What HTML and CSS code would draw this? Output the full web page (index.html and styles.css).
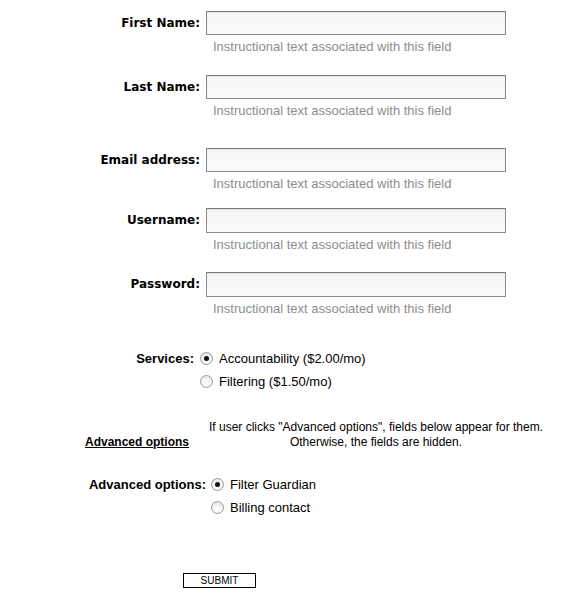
FILE: index.html
```html
<!DOCTYPE html>
<html>
<head>
<meta charset="utf-8">
<link rel="stylesheet" href="styles.css">
</head>
<body>
<form class="form">
  <div class="field f1">
    <label class="lbl">First Name:</label>
    <div class="ctl"><input class="txt" type="text"><div class="help">Instructional text associated with this field</div></div>
  </div>
  <div class="field f2">
    <label class="lbl">Last Name:</label>
    <div class="ctl"><input class="txt" type="text"><div class="help">Instructional text associated with this field</div></div>
  </div>
  <div class="field f3">
    <label class="lbl">Email address:</label>
    <div class="ctl"><input class="txt" type="text"><div class="help">Instructional text associated with this field</div></div>
  </div>
  <div class="field f4">
    <label class="lbl">Username:</label>
    <div class="ctl"><input class="txt" type="text"><div class="help">Instructional text associated with this field</div></div>
  </div>
  <div class="field f5">
    <label class="lbl">Password:</label>
    <div class="ctl"><input class="txt" type="password"><div class="help">Instructional text associated with this field</div></div>
  </div>

  <div class="group services">
    <span class="glbl">Services:</span>
    <div class="opts">
      <label class="opt"><input class="rad" type="radio" name="svc" checked> Accountability ($2.00/mo)</label>
      <label class="opt"><input class="rad" type="radio" name="svc"> Filtering ($1.50/mo)</label>
    </div>
  </div>

  <div class="adv">
    <a class="advlink" href="#">Advanced options</a>
    <p class="note"><span>If user clicks "Advanced options", fields below appear for them.</span><span>Otherwise, the fields are hidden.</span></p>
  </div>

  <div class="group advgroup">
    <span class="glbl">Advanced options:</span>
    <div class="opts">
      <label class="opt"><input class="rad" type="radio" name="adv" checked> Filter Guardian</label>
      <label class="opt"><input class="rad" type="radio" name="adv"> Billing contact</label>
    </div>
  </div>

  <div class="submitrow"><button class="submit" type="button">SUBMIT</button></div>
</form>
</body>
</html>
```
FILE: styles.css
```css
html, body { margin: 0; padding: 0; background: #fff; }
body { font-family: "Liberation Sans", Arial, sans-serif; font-size: 13px; color: #000; width: 576px; }
.form { display: flex; flex-direction: column; }

.field { display: flex; align-items: flex-start; }
.f1 { margin-top: 11px; }
.f2 { margin-top: 20px; }
.f3 { margin-top: 29px; }
.f4 { margin-top: 16px; }
.f5 { margin-top: 19px; }
.lbl {
  width: 200px; text-align: right; box-sizing: border-box;
  font-family: "DejaVu Sans", Verdana, sans-serif; font-weight: bold; font-size: 12px;
  line-height: 24px; height: 24px;
}
.ctl { margin-left: 6px; display: flex; flex-direction: column; }
.txt {
  width: 300px; height: 24px; box-sizing: border-box; margin: 0;
  border: 1px solid #8a8a8a; border-top-color: #7a7a7a;
  background: linear-gradient(#f4f4f4, #fbfbfb);
  box-shadow: inset 0 1px 1px rgba(0,0,0,0.06);
  border-radius: 0; padding: 0 4px; outline: none;
}
.f4 .txt, .f5 .txt { height: 25px; }
.f4 .lbl, .f5 .lbl { line-height: 25px; height: 25px; }
.help { color: #8d8d8d; font-size: 13px; line-height: 16px; margin-top: 4px; padding-left: 7px; }

.group { display: flex; align-items: flex-start; }
.glbl { font-weight: bold; line-height: 23px; text-align: right; box-sizing: border-box; }
.services { margin-top: 30px; }
.services .glbl { width: 194px; }
.opts { display: flex; flex-direction: column; margin-left: 6px; }
.opt { display: flex; align-items: center; height: 23px; gap: 6px; }
.rad {
  -webkit-appearance: none; appearance: none; margin: 0;
  width: 13px; height: 13px; border-radius: 50%; box-sizing: border-box;
  border: 1px solid #9a9a9a;
  background: radial-gradient(circle at 50% 70%, #ffffff 0%, #f0f0f0 55%, #dcdcdc 100%);
  display: inline-grid; place-items: center;
}
.rad:checked::after { content: ""; width: 5px; height: 5px; border-radius: 50%; background: #111; }

.adv { display: flex; align-items: flex-end; margin-top: 27px; }
.advlink { color: #000; font-weight: bold; font-size: 12px; text-decoration: underline; margin-left: 85px; line-height: 16px; }
.note {
  margin: 0 0 0 20px; width: 334px; font-size: 12px; line-height: 15px;
  display: flex; flex-direction: column; align-items: center; white-space: nowrap;
}

.advgroup { margin-top: 23px; }
.advgroup .glbl { width: 206px; }
.advgroup .opts { margin-left: 5px; }

.submitrow { margin-top: 54px; padding-left: 183px; }
.submit {
  display: block;
  width: 73px; height: 15px; box-sizing: border-box; padding: 0; margin: 0;
  border: 1px solid #000; background: #fff; font-family: "Liberation Sans", Arial, sans-serif;
  font-size: 10px; line-height: 12px; color: #000; border-radius: 0;
}
```
